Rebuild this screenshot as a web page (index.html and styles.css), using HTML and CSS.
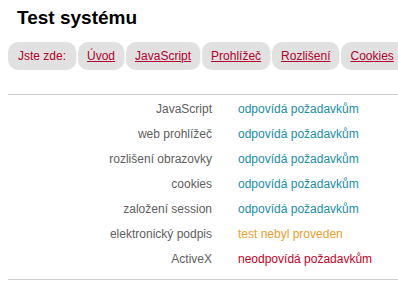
FILE: index.html
```html
<!DOCTYPE html>
<html lang="cs">
<head>
  <meta charset="UTF-8">
  <title>Test systému</title>
  <link rel="stylesheet" href="styles.css">
</head>
<body>
  <h1>Test systému</h1>

  <div class="crumbs">
    <span class="crumb">Jste zde:</span>
    <a class="crumb" href="#">Úvod</a>
    <a class="crumb" href="#">JavaScript</a>
    <a class="crumb" href="#">Prohlížeč</a>
    <a class="crumb" href="#">Rozlišení</a>
    <a class="crumb last" href="#">Cookies</a>
  </div>

  <div class="results">
    <span class="label">JavaScript</span><span class="ok">odpovídá požadavkům</span>
    <span class="label">web prohlížeč</span><span class="ok">odpovídá požadavkům</span>
    <span class="label">rozlišení obrazovky</span><span class="ok">odpovídá požadavkům</span>
    <span class="label">cookies</span><span class="ok">odpovídá požadavkům</span>
    <span class="label">založení session</span><span class="ok">odpovídá požadavkům</span>
    <span class="label">elektronický podpis</span><span class="skip">test nebyl proveden</span>
    <span class="label">ActiveX</span><span class="fail">neodpovídá požadavkům</span>
  </div>
</body>
</html>
```

FILE: styles.css
```css
body {
  margin: 0;
  padding: 0 0 0 8px;
  font-family: 'Liberation Sans', Arial, sans-serif;
  font-size: 12px;
  background: white;
  overflow: hidden;
}
h1 {
  margin: 0;
  padding: 8px 0 0 9px;
  font-size: 19px;
  line-height: 20px;
  font-weight: bold;
  color: #000;
}
.crumbs {
  display: flex;
  gap: 1px;
  margin-top: 14px;
  white-space: nowrap;
}
.crumb {
  flex: none;
  background: #e1e1e1;
  border-radius: 10px;
  height: 28px;
  line-height: 28px;
  padding: 0 9px;
  color: #b4002c;
  border-right: 1px solid #f4f4f4;
}
.crumb:first-child {
  padding: 0 10px;
}
.crumb.last {
  padding-right: 20px;
}
a.crumb {
  text-decoration: underline;
}
.results {
  display: grid;
  grid-template-columns: 204px auto;
  column-gap: 26px;
  grid-auto-rows: 25px;
  align-items: center;
  margin-top: 24px;
  border-top: 1px solid #cccccc;
  border-bottom: 1px solid #cccccc;
  padding: 1px 0 8px;
}
.label {
  text-align: right;
  color: #606060;
}
.ok {
  color: #1b8da6;
}
.skip {
  color: #e8a02a;
}
.fail {
  color: #c8001e;
}
```
